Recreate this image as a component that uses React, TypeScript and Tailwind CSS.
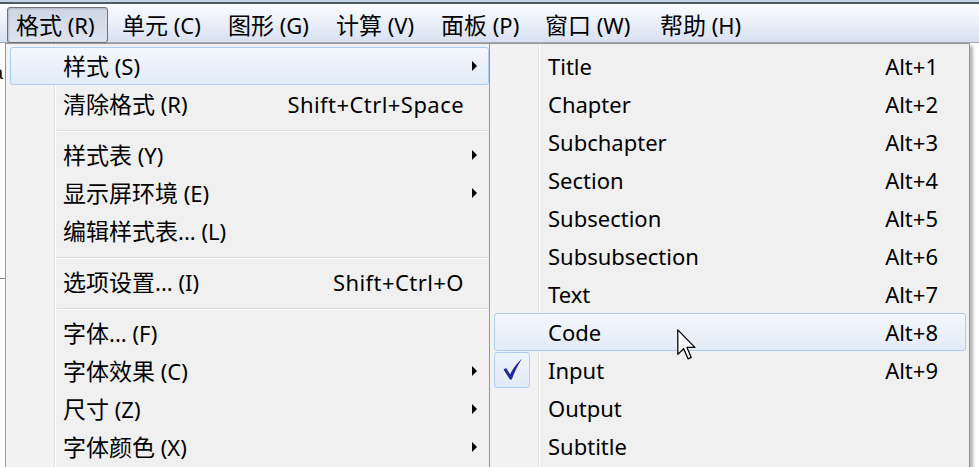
import type { ReactNode } from "react";

type Row =
  | { kind: "item"; label: string; shortcut?: string; arrow?: boolean; active?: boolean }
  | { kind: "sep" };

const leftRows: Row[] = [
  { kind: "item", label: "样式 (S)", arrow: true, active: true },
  { kind: "item", label: "清除格式 (R)", shortcut: "Shift+Ctrl+Space" },
  { kind: "sep" },
  { kind: "item", label: "样式表 (Y)", arrow: true },
  { kind: "item", label: "显示屏环境 (E)", arrow: true },
  { kind: "item", label: "编辑样式表... (L)" },
  { kind: "sep" },
  { kind: "item", label: "选项设置... (I)", shortcut: "Shift+Ctrl+O" },
  { kind: "sep" },
  { kind: "item", label: "字体... (F)" },
  { kind: "item", label: "字体效果 (C)", arrow: true },
  { kind: "item", label: "尺寸 (Z)", arrow: true },
  { kind: "item", label: "字体颜色 (X)", arrow: true },
];

const styleRows = [
  { label: "Title", shortcut: "Alt+1" },
  { label: "Chapter", shortcut: "Alt+2" },
  { label: "Subchapter", shortcut: "Alt+3" },
  { label: "Section", shortcut: "Alt+4" },
  { label: "Subsection", shortcut: "Alt+5" },
  { label: "Subsubsection", shortcut: "Alt+6" },
  { label: "Text", shortcut: "Alt+7" },
  { label: "Code", shortcut: "Alt+8", active: true },
  { label: "Input", shortcut: "Alt+9", checked: true },
  { label: "Output" },
  { label: "Subtitle" },
];

const menuBar = [
  { label: "格式 (R)", width: "w-[101px] mr-[5px]", pressed: true },
  { label: "单元 (C)", width: "w-[106px]" },
  { label: "图形 (G)", width: "w-[108px]" },
  { label: "计算 (V)", width: "w-[105px]" },
  { label: "面板 (P)", width: "w-[104px]" },
  { label: "窗口 (W)", width: "w-[115px]" },
  { label: "帮助 (H)", width: "w-[110px]" },
];

// CJK part of a label is drawn a touch larger, like YaHei next to Segoe UI
function Label({ text }: { text: string }) {
  const m = text.match(/^([\u4e00-\u9fff]+)(.*)$/);
  if (!m) return <>{text}</>;
  return (
    <>
      <span className="text-[23px]">{m[1]}</span>
      <span className="whitespace-pre">{m[2]}</span>
    </>
  );
}

function Arrow() {
  return (
    <svg width="6" height="10" viewBox="0 0 6 10" className="block">
      <path d="M0 0 L5 5 L0 10 Z" fill="#000" />
    </svg>
  );
}

function Highlight({ active, children, className }: { active?: boolean; children: ReactNode; className: string }) {
  return (
    <div
      className={`flex h-[38px] items-center rounded-[3px] border ${
        active ? "border-[#aecdf5] bg-gradient-to-b from-[#f4f8fd] to-[#e3ebf7]" : "border-transparent"
      } ${className}`}
    >
      {children}
    </div>
  );
}

function Cursor() {
  return (
    <svg width="19" height="31" viewBox="0 0 12 19.5" className="absolute left-[677px] top-[329px]">
      <path d="M0.5 0.5 L0.5 16 L4.2 12.4 L7 18.8 L9 17.9 L6.3 11.6 L11.3 11.6 Z" fill="#fff" stroke="#000" strokeWidth="0.8" strokeLinejoin="round" />
    </svg>
  );
}

export default function App() {
  return (
    <div className="relative h-[467px] w-[979px] overflow-hidden bg-white font-['Noto_Sans','Noto_Sans_CJK_SC',sans-serif] text-[22px] leading-none text-black">
      <div className="h-[2px] bg-[#c6d4e7]" />
      <div className="h-[2px] bg-[#4e5b6b]" />

      {/* menu bar */}
      <div className="flex h-[39px] items-start border-b border-[#a3a7ae] bg-gradient-to-b from-[#fbfcfe] via-[#eaeff8] to-[#d8e0f1] pl-[7px]">
        {menuBar.map((item) => (
          <div
            key={item.label}
            className={`mt-[3px] flex h-[36px] shrink-0 items-center ${
              item.pressed
                ? "relative z-10 rounded-[3px] border border-[#6d737a] bg-gradient-to-b from-[#cfd6e3] to-[#dde3ee] pl-[8px] shadow-[inset_1px_1px_2px_rgba(0,0,0,0.15)]"
                : "pl-[9px]"
            } ${item.width}`}
          >
            <Label text={item.label} />
          </div>
        ))}
      </div>

      <div className="flex">
        {/* bit of the document behind the menus */}
        <div className="relative w-[5px] shrink-0 overflow-hidden">
          <div className="pt-[21px] pl-0 text-[18px] font-['Liberation_Sans',sans-serif]">
            <span className="-ml-[7px] block">a</span>
          </div>
          <div className="mt-[196px] h-px w-[5px] bg-[#8a8a8a]" />
        </div>

        {/* Format menu */}
        <div className="h-[430px] w-[485px] shrink-0 border border-[#979797] bg-[linear-gradient(90deg,#f2f2f2_0,#f2f2f2_48px,#e2e3e3_48px,#e2e3e3_49px,#ffffff_49px,#ffffff_50px,#f0f0f0_50px)] pt-[3px] pl-[4px]">
          {leftRows.map((row, i) =>
            row.kind === "sep" ? (
              <div key={i} className="h-[13px] pt-[7px] pl-[47px]">
                <div className="h-px bg-[#dcdcdc]" />
                <div className="h-px bg-white" />
              </div>
            ) : (
              <Highlight key={i} active={row.active} className="pl-[52px]">
                <span className="flex items-center whitespace-nowrap">
                  <Label text={row.label} />
                </span>
                <span className="ml-auto whitespace-nowrap tracking-[0.02em]">{row.shortcut}</span>
                <span className="flex w-[24px] shrink-0 pl-[8px]">{row.arrow ? <Arrow /> : null}</span>
              </Highlight>
            )
          )}
        </div>

        {/* Style submenu */}
        <div className="-ml-px h-[430px] w-[481px] shrink-0 border border-[#979797] bg-[linear-gradient(90deg,#f2f2f2_0,#f2f2f2_48px,#e2e3e3_48px,#e2e3e3_49px,#ffffff_49px,#ffffff_50px,#f0f0f0_50px)] pt-[3px] pl-[4px] pr-[3px] shadow-[3px_3px_3px_rgba(0,0,0,0.3)]">
          {styleRows.map((row) => (
            <div key={row.label} className="relative">
              {row.checked ? (
                <div className="absolute left-0 top-[1px] flex h-[36px] w-[36px] items-center justify-center rounded-[3px] border border-[#aecdf5] bg-gradient-to-b from-[#eef4fc] to-[#e1eaf7]">
                  <svg width="36" height="36" viewBox="0 0 36 36">
                    <path d="M9 17.5 L11.8 15.8 L16 22.5 Q20.5 13 28.5 6 Q22.5 15 17.8 28 L15.8 28 Z" fill="#1f2a9c" />
                  </svg>
                </div>
              ) : null}
              <Highlight active={row.active} className="pl-[53px] pr-[27px]">
                <span>{row.label}</span>
                <span className="ml-auto">{row.shortcut}</span>
              </Highlight>
            </div>
          ))}
        </div>
      </div>

      <Cursor />
    </div>
  );
}
